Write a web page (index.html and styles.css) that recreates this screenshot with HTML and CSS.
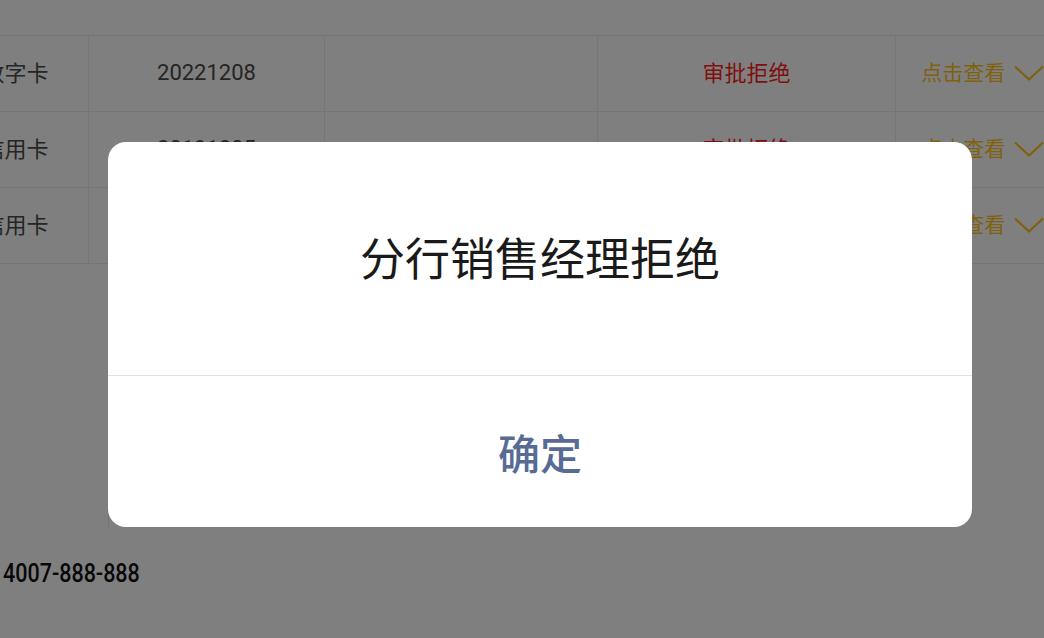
FILE: index.html
```html
<!DOCTYPE html>
<html lang="zh-CN">
<head>
    <meta charset="UTF-8">
    <meta name="viewport" content="width=device-width, initial-scale=1.0">
    <title>申请进度</title>
    <link rel="stylesheet" href="styles.css">
</head>
<body>
    <div class="page">
        <table class="apply-list">
            <colgroup>
                <col class="col-type">
                <col class="col-date">
                <col class="col-note">
                <col class="col-status">
                <col class="col-more">
            </colgroup>
            <tr>
                <td>数字卡</td>
                <td class="num">20221208</td>
                <td></td>
                <td class="rejected">审批拒绝</td>
                <td class="more">点击查看
                    <svg class="chevron" width="30" height="16" viewBox="0 0 30 16">
                        <polyline points="1,1.5 15,14.5 29,1.5" fill="none" stroke="#ffc21c" stroke-width="2.2"/>
                    </svg>
                </td>
            </tr>
            <tr>
                <td>信用卡</td>
                <td class="num">20191205</td>
                <td></td>
                <td class="rejected">审批拒绝</td>
                <td class="more">点击查看
                    <svg class="chevron" width="30" height="16" viewBox="0 0 30 16">
                        <polyline points="1,1.5 15,14.5 29,1.5" fill="none" stroke="#ffc21c" stroke-width="2.2"/>
                    </svg>
                </td>
            </tr>
            <tr>
                <td>信用卡</td>
                <td class="num">20190617</td>
                <td></td>
                <td class="rejected">审批拒绝</td>
                <td class="more">点击查看
                    <svg class="chevron" width="30" height="16" viewBox="0 0 30 16">
                        <polyline points="1,1.5 15,14.5 29,1.5" fill="none" stroke="#ffc21c" stroke-width="2.2"/>
                    </svg>
                </td>
            </tr>
        </table>

        <div class="detail-panel"></div>

        <p class="hotline"><span class="hotline-num">4007-888-888</span></p>
    </div>

    <div class="mask"></div>

    <div class="dialog">
        <div class="dialog-body">分行销售经理拒绝</div>
        <div class="dialog-footer">
            <button class="dialog-btn">确定</button>
        </div>
    </div>
</body>
</html>
```

FILE: styles.css
```css
* {
    margin: 0;
    padding: 0;
    box-sizing: border-box;
}

body {
    font-family: Roboto, "Noto Sans CJK SC", sans-serif;
    background: #fff;
    color: #4a4a4a;
    width: 1044px;
    height: 638px;
    overflow: hidden;
}

.page {
    padding-top: 35px;
}

.apply-list {
    width: 1127px;
    margin-left: -58px;
    border-collapse: collapse;
    table-layout: fixed;
}

.col-type { width: 146px; }
.col-date { width: 236px; }
.col-note { width: 273px; }
.col-status { width: 298px; }
.col-more { width: 174px; }

.apply-list td {
    height: 76px;
    padding-bottom: 5px;
    border: 1px solid #ececec;
    text-align: center;
    font-size: 22px;
    font-family: "Noto Sans CJK SC", sans-serif;
    white-space: nowrap;
}

.apply-list td.num {
    font-family: Roboto, sans-serif;
    padding-bottom: 2px;
}

.rejected {
    color: #ff1f1f;
}

.more {
    color: #ffc21c;
}

.more.more {
    font-size: 21px;
}

.chevron {
    vertical-align: middle;
    margin-left: 4px;
    margin-top: -2px;
}

.detail-panel {
    height: 263px;
    margin-left: 108px;
    border-left: 1px solid #e6e6e6;
}

.hotline {
    margin-top: 32px;
    padding-left: 3px;
    font-family: Roboto, sans-serif;
    font-size: 25px;
    font-weight: 500;
    line-height: 30px;
    color: #111;
}

.hotline-num {
    display: inline-block;
    transform: scaleX(0.86);
    transform-origin: left center;
}

.mask {
    position: fixed;
    inset: 0;
    background: rgba(0, 0, 0, 0.5);
}

.dialog {
    position: fixed;
    left: 108px;
    top: 142px;
    width: 864px;
    height: 385px;
    background: #fff;
    border-radius: 18px;
    display: flex;
    flex-direction: column;
    font-family: "Noto Sans CJK SC", sans-serif;
}

.dialog-body {
    height: 234px;
    display: flex;
    align-items: center;
    justify-content: center;
    font-size: 45px;
    color: #1a1a1a;
    border-bottom: 1px solid #e2e2e2;
    padding-bottom: 4px;
}

.dialog-footer {
    flex: 1;
    display: flex;
}

.dialog-btn {
    flex: 1;
    border: none;
    background: none;
    font-family: "Noto Sans CJK SC", sans-serif;
    font-size: 42px;
    font-weight: 500;
    color: #576b95;
}
```
